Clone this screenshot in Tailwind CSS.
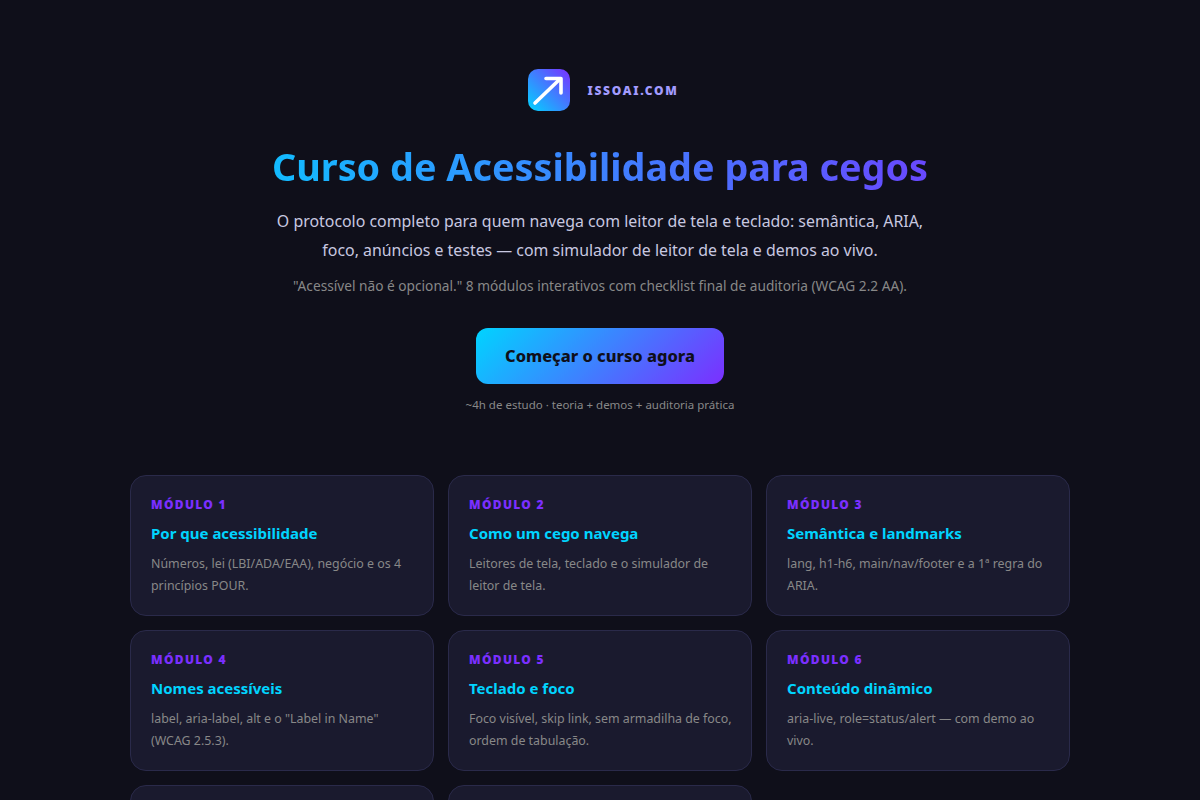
<!DOCTYPE html>
<html lang="pt-BR">
<head>
  <meta charset="UTF-8" />
  <meta name="viewport" content="width=device-width, initial-scale=1.0"/>
  <title>Curso de Acessibilidade para cegos</title>
  <script src="https://cdn.jsdelivr.net/npm/@tailwindcss/browser@4"></script>
</head>
<body class="h-screen overflow-hidden bg-[#0f0f1a] font-['Noto_Sans','Open_Sans',sans-serif] text-[#e0e0f0]">

  <main class="mx-auto w-[940px] pt-[69px]">
    <header class="flex flex-col items-center text-center">
      <div class="flex items-center gap-[17px] pl-[7px]">
        <div class="flex h-[42px] w-[42px] items-center justify-center rounded-[10px] bg-linear-[45deg,#00d4ff,#7b2fff]">
          <svg class="h-[42px] w-[42px]" viewBox="0 0 42 42" fill="none" stroke="#fff" stroke-width="3.6" stroke-linecap="round" stroke-linejoin="round">
            <path d="M7 34 L32 10"/>
            <path d="M18 9.5 H33 V24"/>
          </svg>
        </div>
        <span class="pt-0.5 text-xs font-black tracking-[1.7px] text-[#a29bfe]">ISSOAI.COM</span>
      </div>

      <h1 class="mt-[27px] w-full bg-linear-[90deg,#00d4ff,#7b2fff] bg-clip-text text-[37.8px] leading-[57px] font-bold text-transparent">Curso de Acessibilidade para cegos</h1>
      <p class="mt-3 text-[15.9px] leading-[29px] text-[#c8c8e0]">O protocolo completo para quem navega com leitor de tela e teclado: semântica, ARIA,<br>foco, anúncios e testes — com simulador de leitor de tela e demos ao vivo.</p>
      <p class="mt-[11px] text-[13.7px] leading-[19px] text-[#888888]">"Acessível não é opcional." 8 módulos interativos com checklist final de auditoria (WCAG 2.2 AA).</p>

      <a href="#" class="mt-[33px] flex h-14 w-[248px] items-center justify-center rounded-xl bg-linear-[135deg,#00d4ff,#7b2fff] pt-px text-[16.4px] font-extrabold text-[#0f0f1a]">Começar o curso agora</a>
      <p class="mt-3 text-[11.5px] leading-[18px] text-[#888888]">~4h de estudo · teoria + demos + auditoria prática</p>
    </header>

    <section class="mt-[61px] grid grid-cols-3 gap-[14px]">
      <article class="h-[141px] rounded-2xl border border-[#2a2a4a] bg-[#1a1a2e] p-5">
        <p class="text-xs leading-[18px] font-black tracking-[1.3px] text-[#7b2fff]">MÓDULO 1</p>
        <h2 class="mt-[9px] text-[15px] leading-5 font-bold text-[#00d4ff]">Por que acessibilidade</h2>
        <p class="mt-2.5 text-[12.4px] leading-[22px] text-[#888888]">Números, lei (LBI/ADA/EAA), negócio e os 4 princípios POUR.</p>
      </article>
      <article class="h-[141px] rounded-2xl border border-[#2a2a4a] bg-[#1a1a2e] p-5">
        <p class="text-xs leading-[18px] font-black tracking-[1.3px] text-[#7b2fff]">MÓDULO 2</p>
        <h2 class="mt-[9px] text-[15px] leading-5 font-bold text-[#00d4ff]">Como um cego navega</h2>
        <p class="mt-2.5 text-[12.4px] leading-[22px] text-[#888888]">Leitores de tela, teclado e o simulador de leitor de tela.</p>
      </article>
      <article class="h-[141px] rounded-2xl border border-[#2a2a4a] bg-[#1a1a2e] p-5">
        <p class="text-xs leading-[18px] font-black tracking-[1.3px] text-[#7b2fff]">MÓDULO 3</p>
        <h2 class="mt-[9px] text-[15px] leading-5 font-bold text-[#00d4ff]">Semântica e landmarks</h2>
        <p class="mt-2.5 text-[12.4px] leading-[22px] text-[#888888]">lang, h1-h6, main/nav/footer e a 1ª regra do ARIA.</p>
      </article>
      <article class="h-[141px] rounded-2xl border border-[#2a2a4a] bg-[#1a1a2e] p-5">
        <p class="text-xs leading-[18px] font-black tracking-[1.3px] text-[#7b2fff]">MÓDULO 4</p>
        <h2 class="mt-[9px] text-[15px] leading-5 font-bold text-[#00d4ff]">Nomes acessíveis</h2>
        <p class="mt-2.5 text-[12.4px] leading-[22px] text-[#888888]">label, aria-label, alt e o "Label in Name" (WCAG 2.5.3).</p>
      </article>
      <article class="h-[141px] rounded-2xl border border-[#2a2a4a] bg-[#1a1a2e] p-5">
        <p class="text-xs leading-[18px] font-black tracking-[1.3px] text-[#7b2fff]">MÓDULO 5</p>
        <h2 class="mt-[9px] text-[15px] leading-5 font-bold text-[#00d4ff]">Teclado e foco</h2>
        <p class="mt-2.5 text-[12.4px] leading-[22px] whitespace-nowrap text-[#888888]">Foco visível, skip link, sem armadilha de foco,<br>ordem de tabulação.</p>
      </article>
      <article class="h-[141px] rounded-2xl border border-[#2a2a4a] bg-[#1a1a2e] p-5">
        <p class="text-xs leading-[18px] font-black tracking-[1.3px] text-[#7b2fff]">MÓDULO 6</p>
        <h2 class="mt-[9px] text-[15px] leading-5 font-bold text-[#00d4ff]">Conteúdo dinâmico</h2>
        <p class="mt-2.5 text-[12.4px] leading-[22px] text-[#888888]">aria-live, role=status/alert — com demo ao vivo.</p>
      </article>
      <article class="h-[141px] rounded-2xl border border-[#2a2a4a] bg-[#1a1a2e] p-5"></article>
      <article class="h-[141px] rounded-2xl border border-[#2a2a4a] bg-[#1a1a2e] p-5"></article>
    </section>
  </main>

</body>
</html>
